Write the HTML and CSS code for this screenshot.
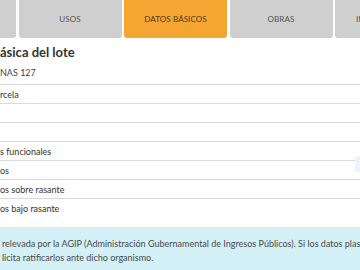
FILE: index.html
```html
<!DOCTYPE html>
<html lang="es">
<head>
<meta charset="utf-8">
<link rel="stylesheet" href="styles.css">
</head>
<body>
<div class="page">
  <nav class="tabs">
    <div class="tab">PARCELA</div>
    <div class="tab">USOS</div>
    <div class="tab active">DATOS BÁSICOS</div>
    <div class="tab">OBRAS</div>
    <div class="tab tab-last">INFO</div>
  </nav>
  <section class="info">
    <h2 class="title">ásica del lote</h2>
    <div class="sub">NAS 127</div>
    <div class="row">rcela</div>
    <div class="row"></div>
    <div class="row"></div>
    <div class="row">s funcionales</div>
    <div class="row">os</div>
    <div class="row">os sobre rasante</div>
    <div class="row last">os bajo rasante</div>
  </section>
  <div class="notice">
    <span class="line">relevada por la AGIP (Administración Gubernamental de Ingresos Públicos). Si los datos plasmados</span>
    <span class="line">licita ratificarlos ante dicho organismo.</span>
  </div>
  <div class="hint"></div>
</div>
</body>
</html>
```
FILE: styles.css
```css
html, body {
  margin: 0;
  padding: 0;
  background: #ffffff;
}
body {
  width: 360px;
  height: 270px;
  overflow: hidden;
  font-family: Lato, "Liberation Sans", sans-serif;
  color: #3d3d3d;
}
.page {
  position: relative;
  width: 360px;
  height: 270px;
  overflow: hidden;
}
.tabs {
  display: flex;
  gap: 2.5px;
  margin-left: -87px;
  height: 38px;
}
.tab {
  flex: 0 0 103px;
  height: 38px;
  background: #cfcfcf;
  border-radius: 0 0 3px 3px;
  display: flex;
  align-items: center;
  justify-content: center;
  font-size: 8px;
  color: #555555;
  letter-spacing: 0.1px;
}
.tab.active {
  background: #f5a632;
  color: #4a3a20;
}
.tab-last {
  justify-content: flex-start;
  padding-left: 21px;
  box-sizing: border-box;
}
.info {
  padding-top: 5px;
}
.title {
  margin: 0;
  font-size: 13px;
  line-height: 18px;
  font-weight: 700;
  color: #333333;
  padding-left: 0;
}
.sub {
  height: 23px;
  line-height: 24px;
  font-size: 9px;
  border-bottom: 1px solid #dadada;
  color: #444444;
}
.row {
  height: 18px;
  line-height: 19px;
  font-size: 9px;
  border-bottom: 1px solid #dadada;
  color: #333333;
}
.row.last {
  border-bottom: none;
}
.notice {
  margin-top: 10px;
  background: #d3f0f7;
  padding: 10px 0 14px 2px;
  font-size: 9px;
  line-height: 14px;
  color: #4a4a4a;
}
.line {
  display: block;
  white-space: nowrap;
  overflow: hidden;
}
.hint {
  position: absolute;
  left: 355px;
  top: 156px;
  width: 12px;
  height: 16px;
  background: #eef3fb;
  border-radius: 3px;
}
```
